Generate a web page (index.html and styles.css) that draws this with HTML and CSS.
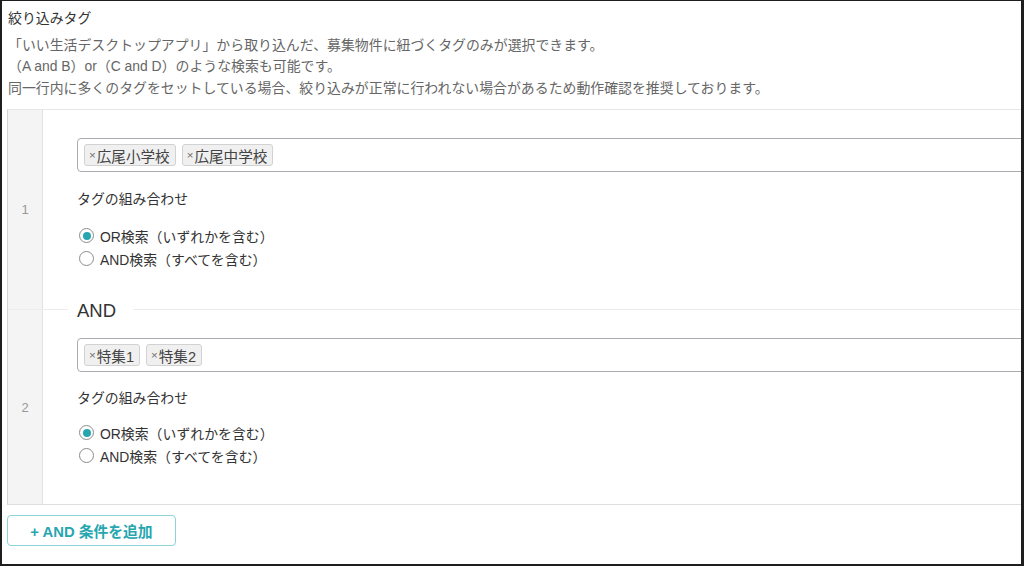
FILE: index.html
```html
<!DOCTYPE html>
<html lang="ja">
<head>
<meta charset="utf-8">
<title>絞り込みタグ</title>
<link rel="stylesheet" href="styles.css">
</head>
<body>
<div class="frame">
  <div class="page">
    <div class="title">絞り込みタグ</div>
    <div class="desc">
      <p>「いい生活デスクトップアプリ」から取り込んだ、募集物件に紐づくタグのみが選択できます。</p>
      <p>（A and B）or（C and D）のような検索も可能です。</p>
      <p>同一行内に多くのタグをセットしている場合、絞り込みが正常に行われない場合があるため動作確認を推奨しております。</p>
    </div>
    <div class="table">
      <div class="row row-first">
        <div class="num">1</div>
        <div class="cell">
          <div class="tagbox">
            <span class="tag"><span class="x">×</span>広尾小学校</span>
            <span class="tag"><span class="x">×</span>広尾中学校</span>
          </div>
          <div class="label">タグの組み合わせ</div>
          <div class="radios">
            <label class="radio"><span class="circle checked"></span>OR検索（いずれかを含む）</label>
            <label class="radio"><span class="circle"></span>AND検索（すべてを含む）</label>
          </div>
        </div>
      </div>
      <div class="row row-and">
        <span class="and-label">AND</span>
        <div class="num">2</div>
        <div class="cell">
          <div class="tagbox">
            <span class="tag"><span class="x">×</span>特集1</span>
            <span class="tag"><span class="x">×</span>特集2</span>
          </div>
          <div class="label">タグの組み合わせ</div>
          <div class="radios">
            <label class="radio"><span class="circle checked"></span>OR検索（いずれかを含む）</label>
            <label class="radio"><span class="circle"></span>AND検索（すべてを含む）</label>
          </div>
        </div>
      </div>
    </div>
    <button class="add-btn">+ AND 条件を追加</button>
  </div>
</div>
</body>
</html>
```

FILE: styles.css
```css
* { box-sizing: border-box; }
html, body { margin: 0; padding: 0; background: #fff; }
body {
  font-family: "Liberation Sans", "Noto Sans CJK JP", sans-serif;
  font-size: 13.9px;
  color: #333;
}
.frame {
  width: 1024px;
  height: 566px;
  border-top: 1px solid #1e1e1e;
  border-left: 2px solid #1e1e1e;
  border-right: 3px solid #1e1e1e;
  border-bottom: 2px solid #1e1e1e;
  overflow: hidden;
  background: #fff;
}
.page {
  width: 1150px;
  padding: 6.5px 0 0 5px;
}
.title {
  line-height: 21px;
  padding-left: 1px;
  color: #333;
}
.desc {
  margin-top: 6px;
  color: #666;
  padding-left: 1px;
}
.desc p {
  margin: 0;
  line-height: 21.5px;
}
.table {
  margin-top: 10px;
  border-top: 1px solid #e6e6e6;
  border-left: 1px solid #d4d4d4;
  border-bottom: 1px solid #dcdee0;
}
.row {
  display: grid;
  grid-template-columns: 35px 1fr;
  position: relative;
}
.row-and {
  border-top: 1px solid #ececec;
}
.num {
  background: #f4f4f4;
  border-right: 1px solid #e2e2e2;
  color: #999;
  font-size: 13px;
  display: flex;
  align-items: center;
  justify-content: center;
}
.cell {
  padding: 28px 0 39px 34px;
}
.row-and .cell {
  padding: 28px 0 37px 34px;
}
.row-and .label {
  margin-top: 16px;
}
.row-and .radios {
  margin-top: 13px;
}
.tagbox {
  height: 34px;
  border: 1px solid #a8acb1;
  border-radius: 4px;
  display: flex;
  align-items: center;
  gap: 6px;
  padding-left: 6px;
}
.tag {
  height: 22px;
  display: inline-flex;
  align-items: center;
  padding: 0 5px 0 4px;
  background: #f0f0f0;
  border: 1px solid #d2d2d2;
  border-radius: 3px;
  font-size: 14.6px;
  color: #444;
}
.tag .x {
  font-size: 11.5px;
  color: #6f6f6f;
  margin-right: 1px;
}
.label {
  margin-top: 17px;
  line-height: 20px;
  color: #333;
}
.radios {
  margin-top: 15px;
  display: flex;
  flex-direction: column;
}
.radio {
  display: flex;
  align-items: center;
  height: 23px;
  color: #333;
  padding-left: 2px;
}
.circle {
  width: 15px;
  height: 15px;
  border: 1px solid #8c8c8c;
  border-radius: 50%;
  background: #fff;
  margin-right: 6px;
  display: inline-flex;
  align-items: center;
  justify-content: center;
}
.circle.checked::after {
  content: "";
  width: 8px;
  height: 8px;
  border-radius: 50%;
  background: #27a6af;
}
.and-label {
  position: absolute;
  top: -10px;
  left: 60px;
  padding: 0 17px 0 9px;
  background: #fff;
  font-size: 18.5px;
  line-height: 22px;
  color: #333;
  z-index: 1;
}
.add-btn {
  margin-top: 10px;
  margin-left: 0;
  width: 169px;
  height: 31px;
  border: 1px solid #8dd3d8;
  border-radius: 4px;
  background: #fff;
  color: #27a6af;
  font-family: "Liberation Sans", "Noto Sans CJK JP", sans-serif;
  font-size: 14.8px;
  font-weight: bold;
  padding: 0;
}
```
